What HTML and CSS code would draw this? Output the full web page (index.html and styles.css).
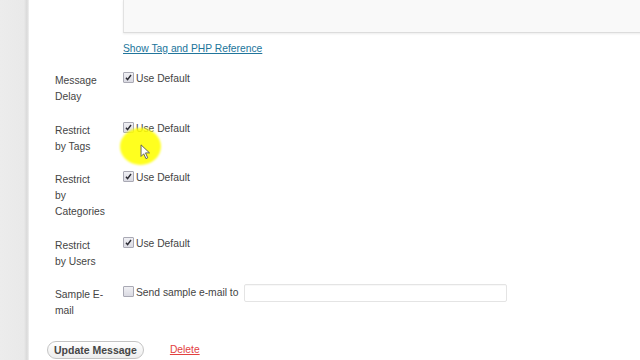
FILE: index.html
```html
<!DOCTYPE html>
<html lang="en">

<head>
  <meta charset="UTF-8">
  <meta name="viewport" content="width=device-width, initial-scale=1.0">
  <title>Edit Message</title>
  <link rel="stylesheet" href="styles.css">
</head>

<body>
  <div class="page">
    <!-- admin menu strip -->
    <div class="sidebar"></div>

    <div class="main">
      <!-- message body textarea, scrolled so only its bottom shows -->
      <div class="editor"></div>
      <a class="ref-link" href="#">Show Tag and PHP Reference</a>

      <div class="form-table">
        <div class="row">
          <div class="label">Message<br>Delay</div>
          <div class="field">
            <span class="check on"><svg viewBox="0 0 10 10"><path d="M2.2 5.2 L4 7.4 L7.8 2.2" /></svg></span>
            <span>Use Default</span>
          </div>
        </div>
        <div class="row">
          <div class="label">Restrict<br>by Tags</div>
          <div class="field">
            <span class="check on"><svg viewBox="0 0 10 10"><path d="M2.2 5.2 L4 7.4 L7.8 2.2" /></svg></span>
            <span>Use Default</span>
          </div>
        </div>
        <div class="row">
          <div class="label">Restrict<br>by<br>Categories</div>
          <div class="field">
            <span class="check on"><svg viewBox="0 0 10 10"><path d="M2.2 5.2 L4 7.4 L7.8 2.2" /></svg></span>
            <span>Use Default</span>
          </div>
        </div>
        <div class="row">
          <div class="label">Restrict<br>by Users</div>
          <div class="field">
            <span class="check on"><svg viewBox="0 0 10 10"><path d="M2.2 5.2 L4 7.4 L7.8 2.2" /></svg></span>
            <span>Use Default</span>
          </div>
        </div>
        <div class="row">
          <div class="label">Sample E-<br>mail</div>
          <div class="field">
            <span class="check"></span>
            <span>Send sample e-mail to</span>
            <input class="email" type="text">
          </div>
        </div>
      </div>

      <div class="submit">
        <button class="button">Update Message</button>
        <a class="delete" href="#">Delete</a>
      </div>
    </div>
  </div>

  <!-- screen recorder click highlight + pointer -->
  <div class="highlight"></div>
  <svg class="cursor" viewBox="0 0 12 18">
    <path d="M1 1 L1 14 L4 11 L6.5 16.5 L8.5 15.5 L6 10 L10.5 10 Z" />
  </svg>
</body>

</html>
```

FILE: styles.css
```css
* {
  box-sizing: border-box;
}

body {
  margin: 0;
  background: #fff;
  font-family: "Liberation Sans", Arial, sans-serif;
  font-size: 10.3px;
  line-height: 16px;
  color: #444;
  overflow: hidden;
}

.page {
  display: flex;
  min-height: 360px;
}

/* 左侧菜单 */
.sidebar {
  width: 29px;
  flex-shrink: 0;
  background: linear-gradient(to right, #ececec 0, #e9e9e9 24px, #d9d9d9 27px, #f2f2f2 29px);
}

.main {
  flex: 1;
  padding-left: 26px;
}

.editor {
  margin-left: 68px;
  margin-right: -20px;
  height: 33px;
  background: #f9f9f9;
  border-left: 1px solid #e2e2e2;
  border-bottom: 1px solid #dcdcdc;
  box-shadow: 0 1px 2px rgba(0, 0, 0, 0.08);
}

.ref-link {
  display: inline-block;
  margin: 8px 0 0 68px;
  color: #21759b;
  text-decoration: underline;
}

.form-table {
  margin-top: 8px;
}

.row {
  display: flex;
  padding: 8px 0 9.5px;
}

.label {
  width: 68px;
  flex-shrink: 0;
}

/* 右侧字段比标签略高一点 */
.field {
  display: flex;
  align-items: flex-start;
  margin-top: -2px;
}

.check {
  width: 11px;
  height: 11px;
  margin: 1px 2px 0 0;
  border: 1px solid #a9a9b4;
  border-radius: 1px;
  background: linear-gradient(#f0f0f4, #dadae2);
}

.check svg {
  display: block;
  width: 9px;
  height: 9px;
}

.check svg path {
  fill: none;
  stroke: #2b2b33;
  stroke-width: 1.6;
}

.email {
  width: 263px;
  height: 18px;
  margin: -1px 0 0 6px;
  border: 1px solid #e4e4e4;
  border-radius: 2px;
  background: #fff;
  box-shadow: inset 0 1px 1px rgba(0, 0, 0, 0.03);
}

.submit {
  display: flex;
  align-items: center;
  margin: 12px 0 0 -8px;
}

.button {
  height: 18px;
  padding: 0 6px;
  font-family: inherit;
  font-size: 10.5px;
  font-weight: bold;
  color: #464646;
  border: 1px solid #c4c4c4;
  border-radius: 9px;
  background: linear-gradient(#ffffff, #ededed);
}

.delete {
  margin-left: 26px;
  color: #e2413f;
  text-decoration: underline;
}

/* 录屏鼠标高亮 */
.highlight {
  position: absolute;
  left: 120px;
  top: 128px;
  width: 41px;
  height: 37px;
  border-radius: 50%;
  background: rgba(255, 255, 0, 0.88);
  filter: blur(1px);
}

.cursor {
  position: absolute;
  left: 140px;
  top: 144px;
  width: 11px;
  height: 16px;
}

.cursor path {
  fill: #fff;
  stroke: #555;
  stroke-width: 1;
}
```
